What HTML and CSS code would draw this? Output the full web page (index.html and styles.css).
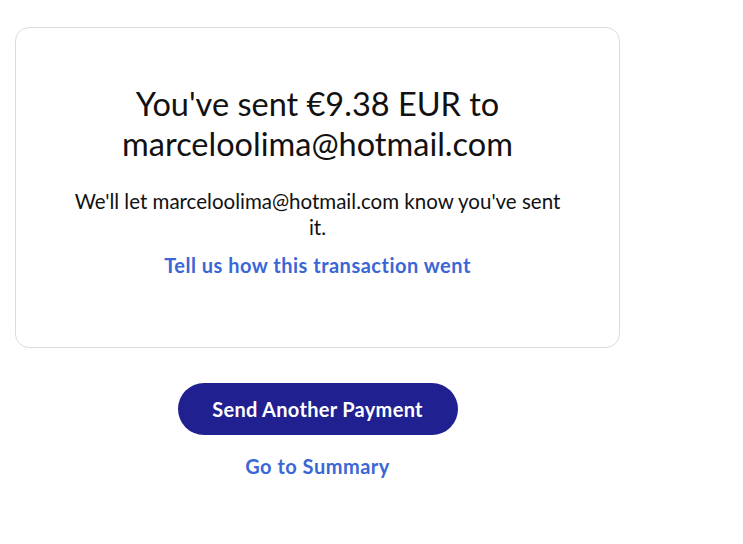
FILE: index.html
```html
<!DOCTYPE html>
<html lang="en">
<head>
<meta charset="utf-8">
<title>Payment sent</title>
<link rel="stylesheet" href="styles.css">
</head>
<body>
<main class="page">
  <section class="card">
    <h1 class="title">You've sent €9.38 EUR to marceloolima@hotmail.com</h1>
    <p class="note">We'll let marceloolima@hotmail.com know you've sent it.</p>
    <a class="link feedback" href="#">Tell us how this transaction went</a>
  </section>
  <div class="actions">
    <button class="primary" type="button">Send Another Payment</button>
    <a class="link summary" href="#">Go to Summary</a>
  </div>
</main>
</body>
</html>
```

FILE: styles.css
```css
html, body {
  margin: 0;
  padding: 0;
  background: #ffffff;
}
body {
  font-family: Lato, "Noto Sans", sans-serif;
  color: #111111;
}
.page {
  width: 605px;
  padding: 27px 0 0 15px;
  display: flex;
  flex-direction: column;
}
.card {
  box-sizing: border-box;
  height: 321px;
  border: 1px solid #dcdcdc;
  border-radius: 14px;
  padding: 56px 40px 0;
  display: flex;
  flex-direction: column;
  align-items: center;
  text-align: center;
}
.title {
  margin: 0;
  font-weight: 400;
  font-size: 32.5px;
  line-height: 40px;
  width: 440px;
}
.note {
  margin: 24px 0 0;
  font-size: 20.5px;
  line-height: 26px;
  width: 495px;
}
.link {
  color: #3a66d6;
  font-weight: 700;
  font-size: 20px;
  letter-spacing: 0.5px;
  text-decoration: none;
}
.feedback {
  margin-top: 12px;
  line-height: 26px;
}
.actions {
  display: flex;
  flex-direction: column;
  align-items: center;
  padding-top: 35px;
}
.primary {
  width: 280px;
  height: 52px;
  border: 0;
  border-radius: 26px;
  background: #202090;
  color: #ffffff;
  font-family: Lato, "Noto Sans", sans-serif;
  font-size: 20px;
  font-weight: 700;
  letter-spacing: 0.3px;
  cursor: pointer;
}
.summary {
  margin-top: 19px;
  line-height: 24px;
}
```
